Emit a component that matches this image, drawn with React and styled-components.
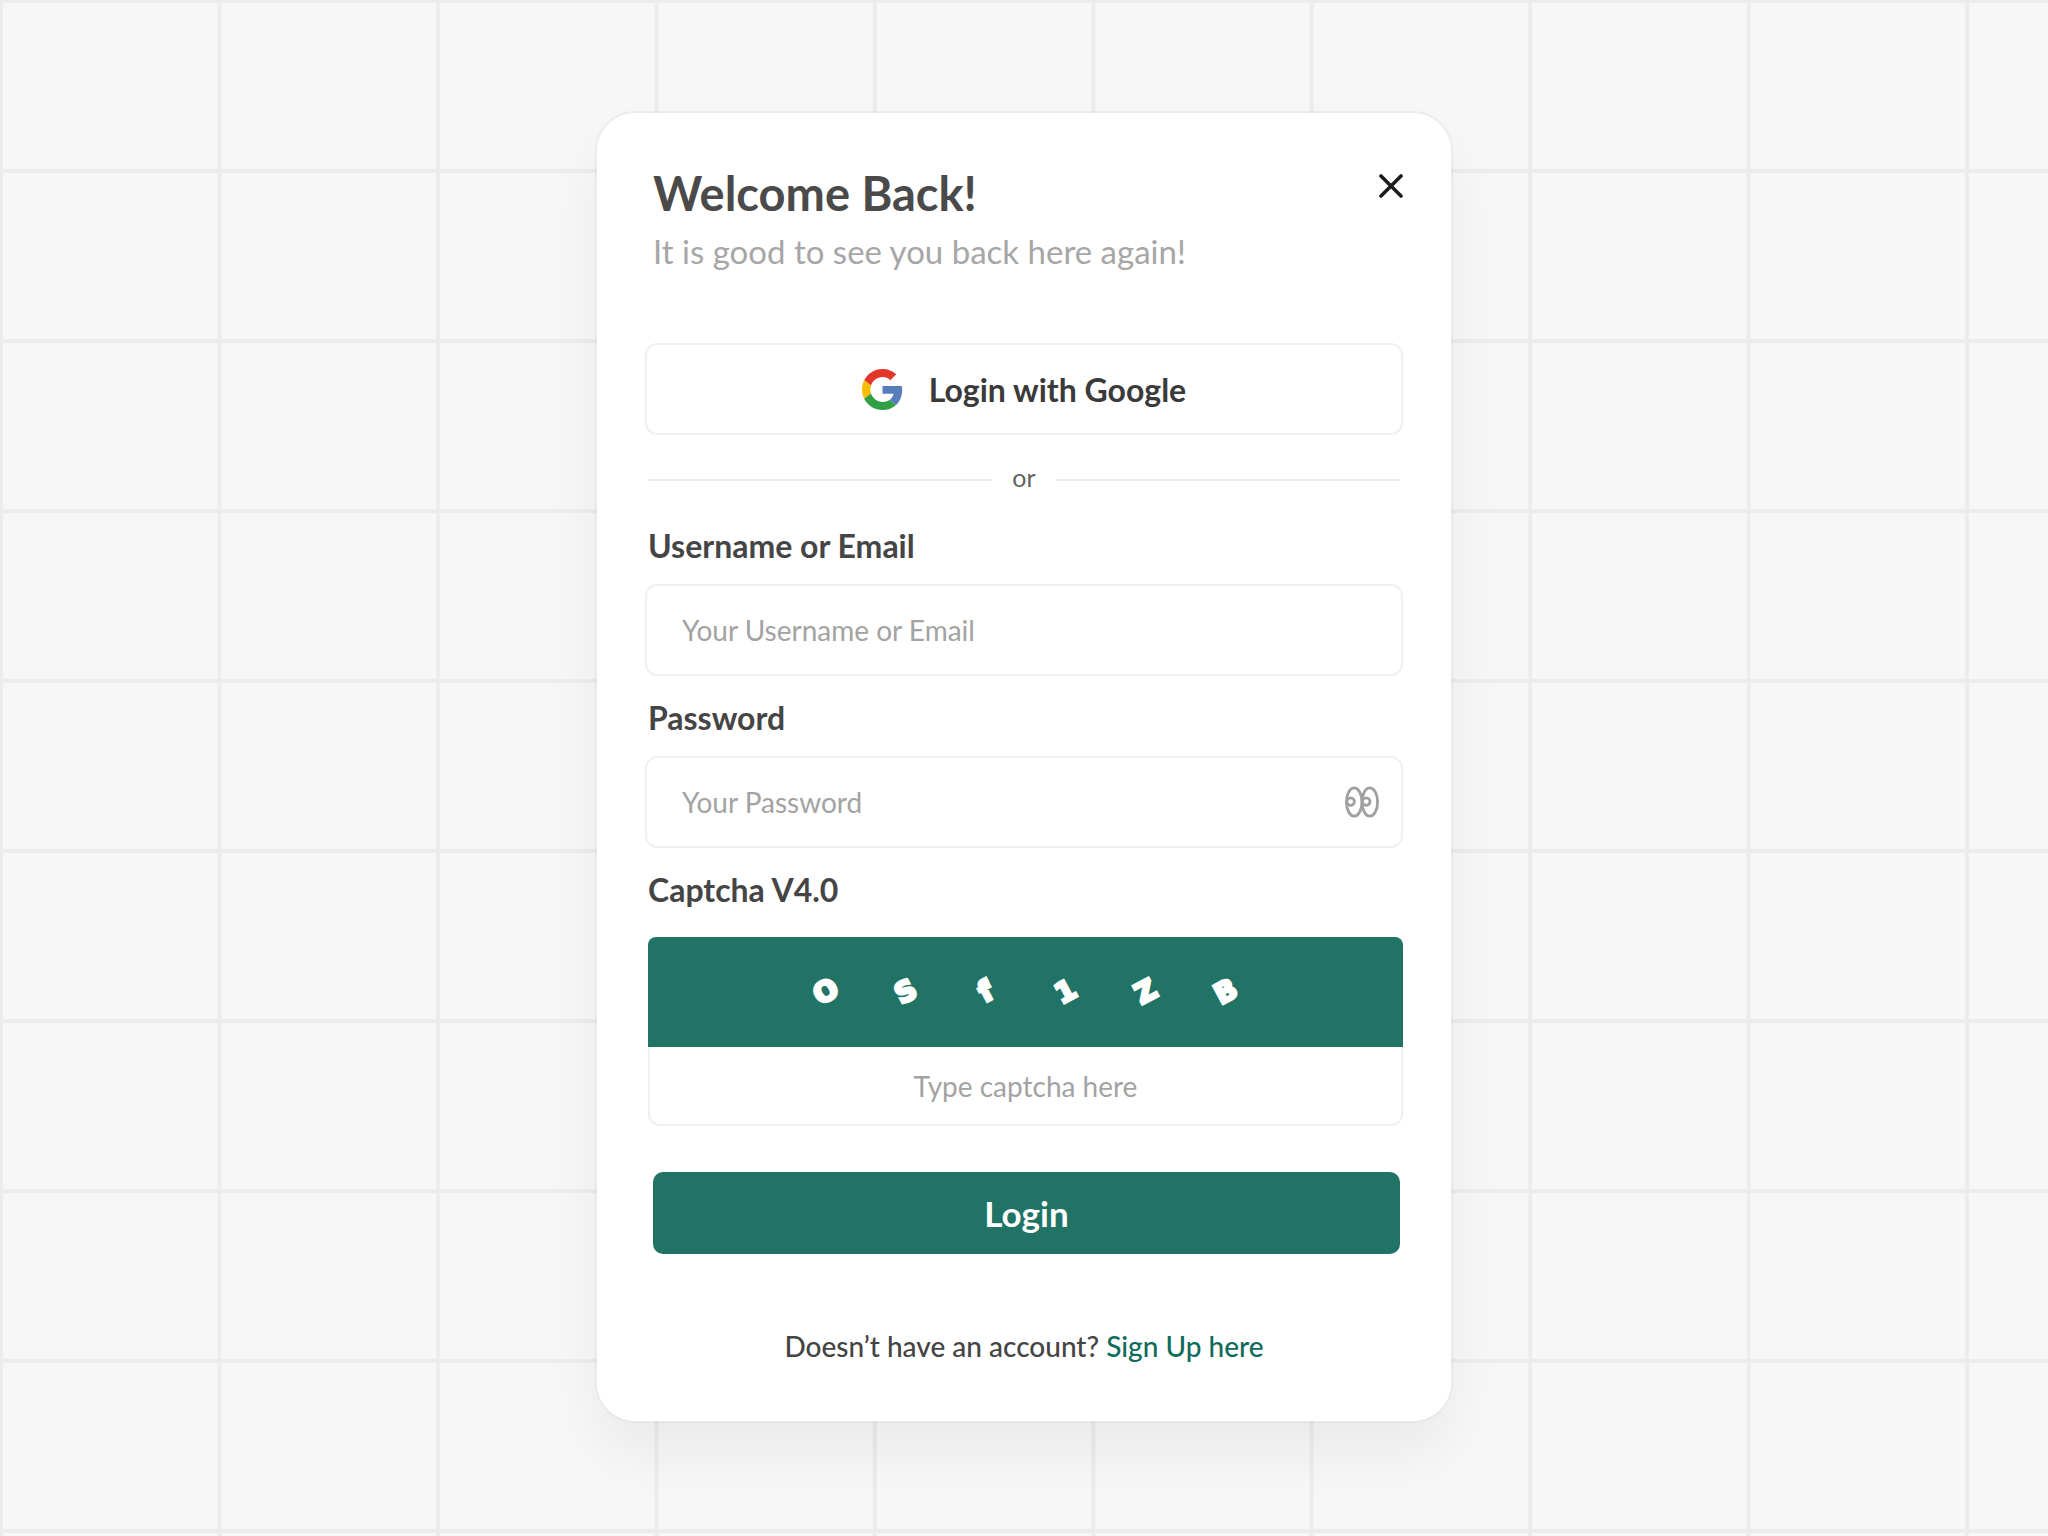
import { useState } from "react";
import styled, { createGlobalStyle } from "styled-components";

const GlobalStyle = createGlobalStyle`
  * {
    box-sizing: border-box;
  }
  body {
    margin: 0;
    background-color: #f7f7f7;
    font-family: Lato, "Liberation Sans", sans-serif;
  }
  button,
  input {
    font-family: inherit;
  }
`;
const Page = styled.main`
  display: flex;
  justify-content: center;
  align-items: flex-start;
  min-height: 100vh;
  padding: 111px 24px 113px;
  background-color: #f7f7f7;
  background-image: linear-gradient(to right, #ececec 4px, transparent 4px),
    linear-gradient(to bottom, #ececec 4px, transparent 4px);
  background-size: calc(100% * 8 / 75) 170px;
  background-position: -1px -1px;
`;
const Card = styled.section`
  width: 100%;
  max-width: 858px;
  padding: 51px 48px 57px;
  background-color: white;
  background-clip: padding-box;
  border: 2px solid rgba(0, 0, 0, 0.04);
  border-radius: 40px;
  box-shadow: 0 32px 56px rgba(0, 0, 0, 0.05);
`;
const Header = styled.header`
  display: flex;
  justify-content: space-between;
  align-items: flex-start;
  padding-left: 8px;
  margin-bottom: 72px;
`;
const Title = styled.h1`
  margin: 0 0 9px;
  font-size: 47px;
  line-height: 58px;
  font-weight: 700;
  color: #4a4a4a;
`;
const Subtitle = styled.p`
  margin: 0;
  font-size: 33px;
  line-height: 40px;
  color: #a6a6a6;
`;
const IconButton = styled.button`
  display: flex;
  flex-shrink: 0;
  padding: 0;
  border: none;
  background: none;
  color: ${(props) => props.$color};
  cursor: pointer;
`;
const CloseButton = styled(IconButton)`
  margin-top: 10px;
`;
const GoogleButton = styled.button`
  display: flex;
  justify-content: center;
  align-items: center;
  gap: 26px;
  width: 100%;
  height: 92px;
  border: 2px solid #f0f0f0;
  border-radius: 12px;
  background-color: white;
  font-size: 32px;
  font-weight: 700;
  color: #3a3a3a;
  cursor: pointer;
`;
const Divider = styled.div`
  display: flex;
  align-items: center;
  gap: 19px;
  margin: 26px 3px 27px;
`;
const Line = styled.div`
  flex: 1;
  height: 2px;
  background-color: #eeeeee;
`;
const Or = styled.span`
  padding-bottom: 6px;
  font-size: 25px;
  line-height: 32px;
  color: #636363;
`;
const Label = styled.label`
  display: block;
  margin: 0 0 ${(props) => props.$gap || 18}px 3px;
  font-size: 32px;
  line-height: 40px;
  font-weight: 700;
  color: #454545;
`;
const Field = styled.div`
  display: flex;
  align-items: center;
  height: 92px;
  padding: 0 22px 0 35px;
  margin-bottom: 22px;
  border: 2px solid #f0f0f0;
  border-radius: 12px;
`;
const Input = styled.input`
  flex: 1;
  min-width: 0;
  height: 100%;
  padding: 0;
  border: none;
  outline: none;
  background: none;
  font-size: 28px;
  color: #454545;
  &::placeholder {
    color: #a3a3a3;
    opacity: 1;
  }
`;
const Captcha = styled.div`
  margin: 0 0 46px 3px;
`;
const Code = styled.div`
  display: flex;
  justify-content: center;
  align-items: center;
  height: 110px;
  border-radius: 8px 8px 0 0;
  background-color: #217365;
`;
const Letter = styled.span`
  width: 80px;
  text-align: center;
  font-family: "DejaVu Sans", sans-serif;
  font-size: 28px;
  line-height: 32px;
  font-weight: 700;
  color: white;
  -webkit-text-stroke: 3px white;
  transform: rotate(-28deg);
`;
const CaptchaInput = styled(Input)`
  display: block;
  width: 100%;
  height: 79px;
  border: 2px solid #f0f0f0;
  border-top: none;
  border-radius: 0 0 12px 12px;
  text-align: center;
`;
const LoginButton = styled.button`
  display: block;
  width: calc(100% - 11px);
  height: 82px;
  margin: 0 3px 74px 8px;
  border: none;
  border-radius: 10px;
  background-color: #217365;
  font-size: 35px;
  font-weight: 700;
  color: white;
  cursor: pointer;
`;
const Footer = styled.p`
  margin: 0;
  text-align: center;
  font-size: 28px;
  line-height: 36px;
  font-weight: 500;
  color: #444444;
`;
const SignUp = styled.a`
  color: #0f6b5a;
  text-decoration: none;
`;

function CloseIcon() {
  return (
    <svg width="24" height="24" viewBox="0 0 24 24" fill="none">
      <path
        d="M2 2l20 20M22 2L2 22"
        stroke="currentColor"
        strokeWidth="3.6"
        strokeLinecap="round"
      />
    </svg>
  );
}

function GoogleIcon() {
  return (
    <svg width="41" height="41" viewBox="0 0 48 48">
      <path
        fill="#e33629"
        d="M24 9.5c3.54 0 6.71 1.22 9.21 3.6l6.85-6.85C35.9 2.38 30.47 0 24 0 14.62 0 6.51 5.38 2.56 13.22l7.98 6.19C12.43 13.72 17.74 9.5 24 9.5z"
      />
      <path
        fill="#587dbd"
        d="M46.98 24.55c0-1.57-.15-3.09-.38-4.55H24v9.02h12.94c-.58 2.96-2.26 5.48-4.78 7.18l7.73 6c4.51-4.18 7.09-10.36 7.09-17.65z"
      />
      <path
        fill="#f8bd00"
        d="M10.53 28.59c-.48-1.45-.76-2.99-.76-4.59s.27-3.14.76-4.59l-7.98-6.19C.92 16.46 0 20.12 0 24c0 3.88.92 7.54 2.56 10.78l7.97-6.19z"
      />
      <path
        fill="#319f43"
        d="M24 48c6.48 0 11.93-2.13 15.89-5.81l-7.73-6c-2.15 1.45-4.92 2.3-8.16 2.3-6.26 0-11.57-4.22-13.47-9.91l-7.98 6.19C6.51 42.62 14.62 48 24 48z"
      />
    </svg>
  );
}

function EyesIcon() {
  return (
    <svg
      width="34"
      height="32"
      viewBox="0 0 34 32"
      fill="none"
      stroke="currentColor"
      strokeWidth="2.8"
    >
      <ellipse cx="9.2" cy="16" rx="7.8" ry="14.2" />
      <ellipse cx="24.8" cy="16" rx="7.8" ry="14.2" />
      <circle cx="5.6" cy="15.6" r="3.8" />
      <circle cx="21.2" cy="15.6" r="3.8" />
    </svg>
  );
}

const code = ["O", "S", "f", "1", "Z", "B"];

export default function App() {
  const [visible, setVisible] = useState(false);

  return (
    <>
      <GlobalStyle />
      <Page>
        <Card>
          <Header>
            <div>
              <Title>Welcome Back!</Title>
              <Subtitle>It is good to see you back here again!</Subtitle>
            </div>
            <CloseButton type="button" $color="#1c1c1c" aria-label="Close">
              <CloseIcon />
            </CloseButton>
          </Header>
          <form onSubmit={(e) => e.preventDefault()}>
            <GoogleButton type="button">
              <GoogleIcon />
              Login with Google
            </GoogleButton>
            <Divider>
              <Line />
              <Or>or</Or>
              <Line />
            </Divider>
            <Label htmlFor="username">Username or Email</Label>
            <Field>
              <Input id="username" placeholder="Your Username or Email" />
            </Field>
            <Label htmlFor="password">Password</Label>
            <Field>
              <Input
                id="password"
                type={visible ? "text" : "password"}
                placeholder="Your Password"
              />
              <IconButton
                type="button"
                $color="#a0a0a0"
                aria-label="Show password"
                onClick={() => setVisible(!visible)}
              >
                <EyesIcon />
              </IconButton>
            </Field>
            <Label htmlFor="captcha" $gap={27}>
              Captcha V4.0
            </Label>
            <Captcha>
              <Code>
                {code.map((letter) => (
                  <Letter key={letter}>{letter}</Letter>
                ))}
              </Code>
              <CaptchaInput id="captcha" placeholder="Type captcha here" />
            </Captcha>
            <LoginButton type="submit">Login</LoginButton>
          </form>
          <Footer>
            Doesn’t have an account? <SignUp href="#">Sign Up here</SignUp>
          </Footer>
        </Card>
      </Page>
    </>
  );
}
